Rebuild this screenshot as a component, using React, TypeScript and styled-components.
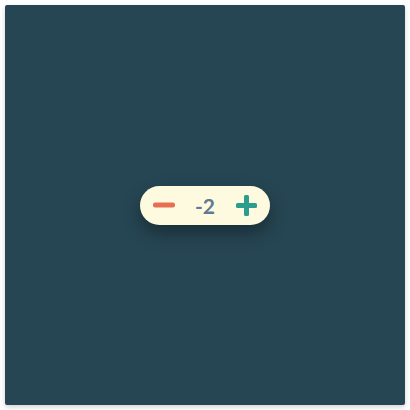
import React, { useState } from "react";
import styled, { createGlobalStyle } from "styled-components";

const Global = createGlobalStyle`
  html, body { margin: 0; padding: 0; background: #ffffff; }
  body { padding: 5px; font-family: "Lato", "Liberation Sans", sans-serif; }
`;

const Panel = styled.div`
  width: 400px;
  height: 400px;
  background: #264653;
  border-radius: 2px;
  box-shadow: 0 2px 5px rgba(0, 0, 0, 0.18);
  display: flex;
  align-items: center;
  justify-content: center;
`;

const Pill = styled.div`
  width: 130px;
  height: 39px;
  box-sizing: border-box;
  padding: 0 4px;
  background: #fefae0;
  border-radius: 20px;
  display: flex;
  align-items: center;
  box-shadow: 0 8px 18px rgba(0, 0, 0, 0.35);
`;

const IconButton = styled.button`
  width: 40px;
  height: 39px;
  border: none;
  background: transparent;
  padding: 0;
  display: flex;
  align-items: center;
  justify-content: center;
  cursor: pointer;
`;

const Value = styled.span`
  flex: 1;
  text-align: center;
  font-family: "Lato", "Liberation Sans", sans-serif;
  font-weight: 700;
  font-size: 21px;
  color: #5f7b93;
  line-height: 1;
  margin-top: 1px;
`;

export default function App() {
  const [n, setN] = useState(-2);
  return (
    <>
      <Global />
      <Panel>
        <Pill>
          <IconButton aria-label="decrement" onClick={() => setN(n - 1)}>
            <svg width="22" height="6" viewBox="0 0 22 6">
              <rect x="0" y="0.5" width="22" height="5" rx="2" fill="#e76f51" />
            </svg>
          </IconButton>
          <Value>{n}</Value>
          <IconButton aria-label="increment" onClick={() => setN(n + 1)}>
            <svg width="21" height="21" viewBox="0 0 21 21">
              <rect x="0" y="8" width="21" height="5" rx="1.5" fill="#2a9d8f" />
              <rect x="8" y="0" width="5" height="21" rx="1.5" fill="#2a9d8f" />
            </svg>
          </IconButton>
        </Pill>
      </Panel>
    </>
  );
}
